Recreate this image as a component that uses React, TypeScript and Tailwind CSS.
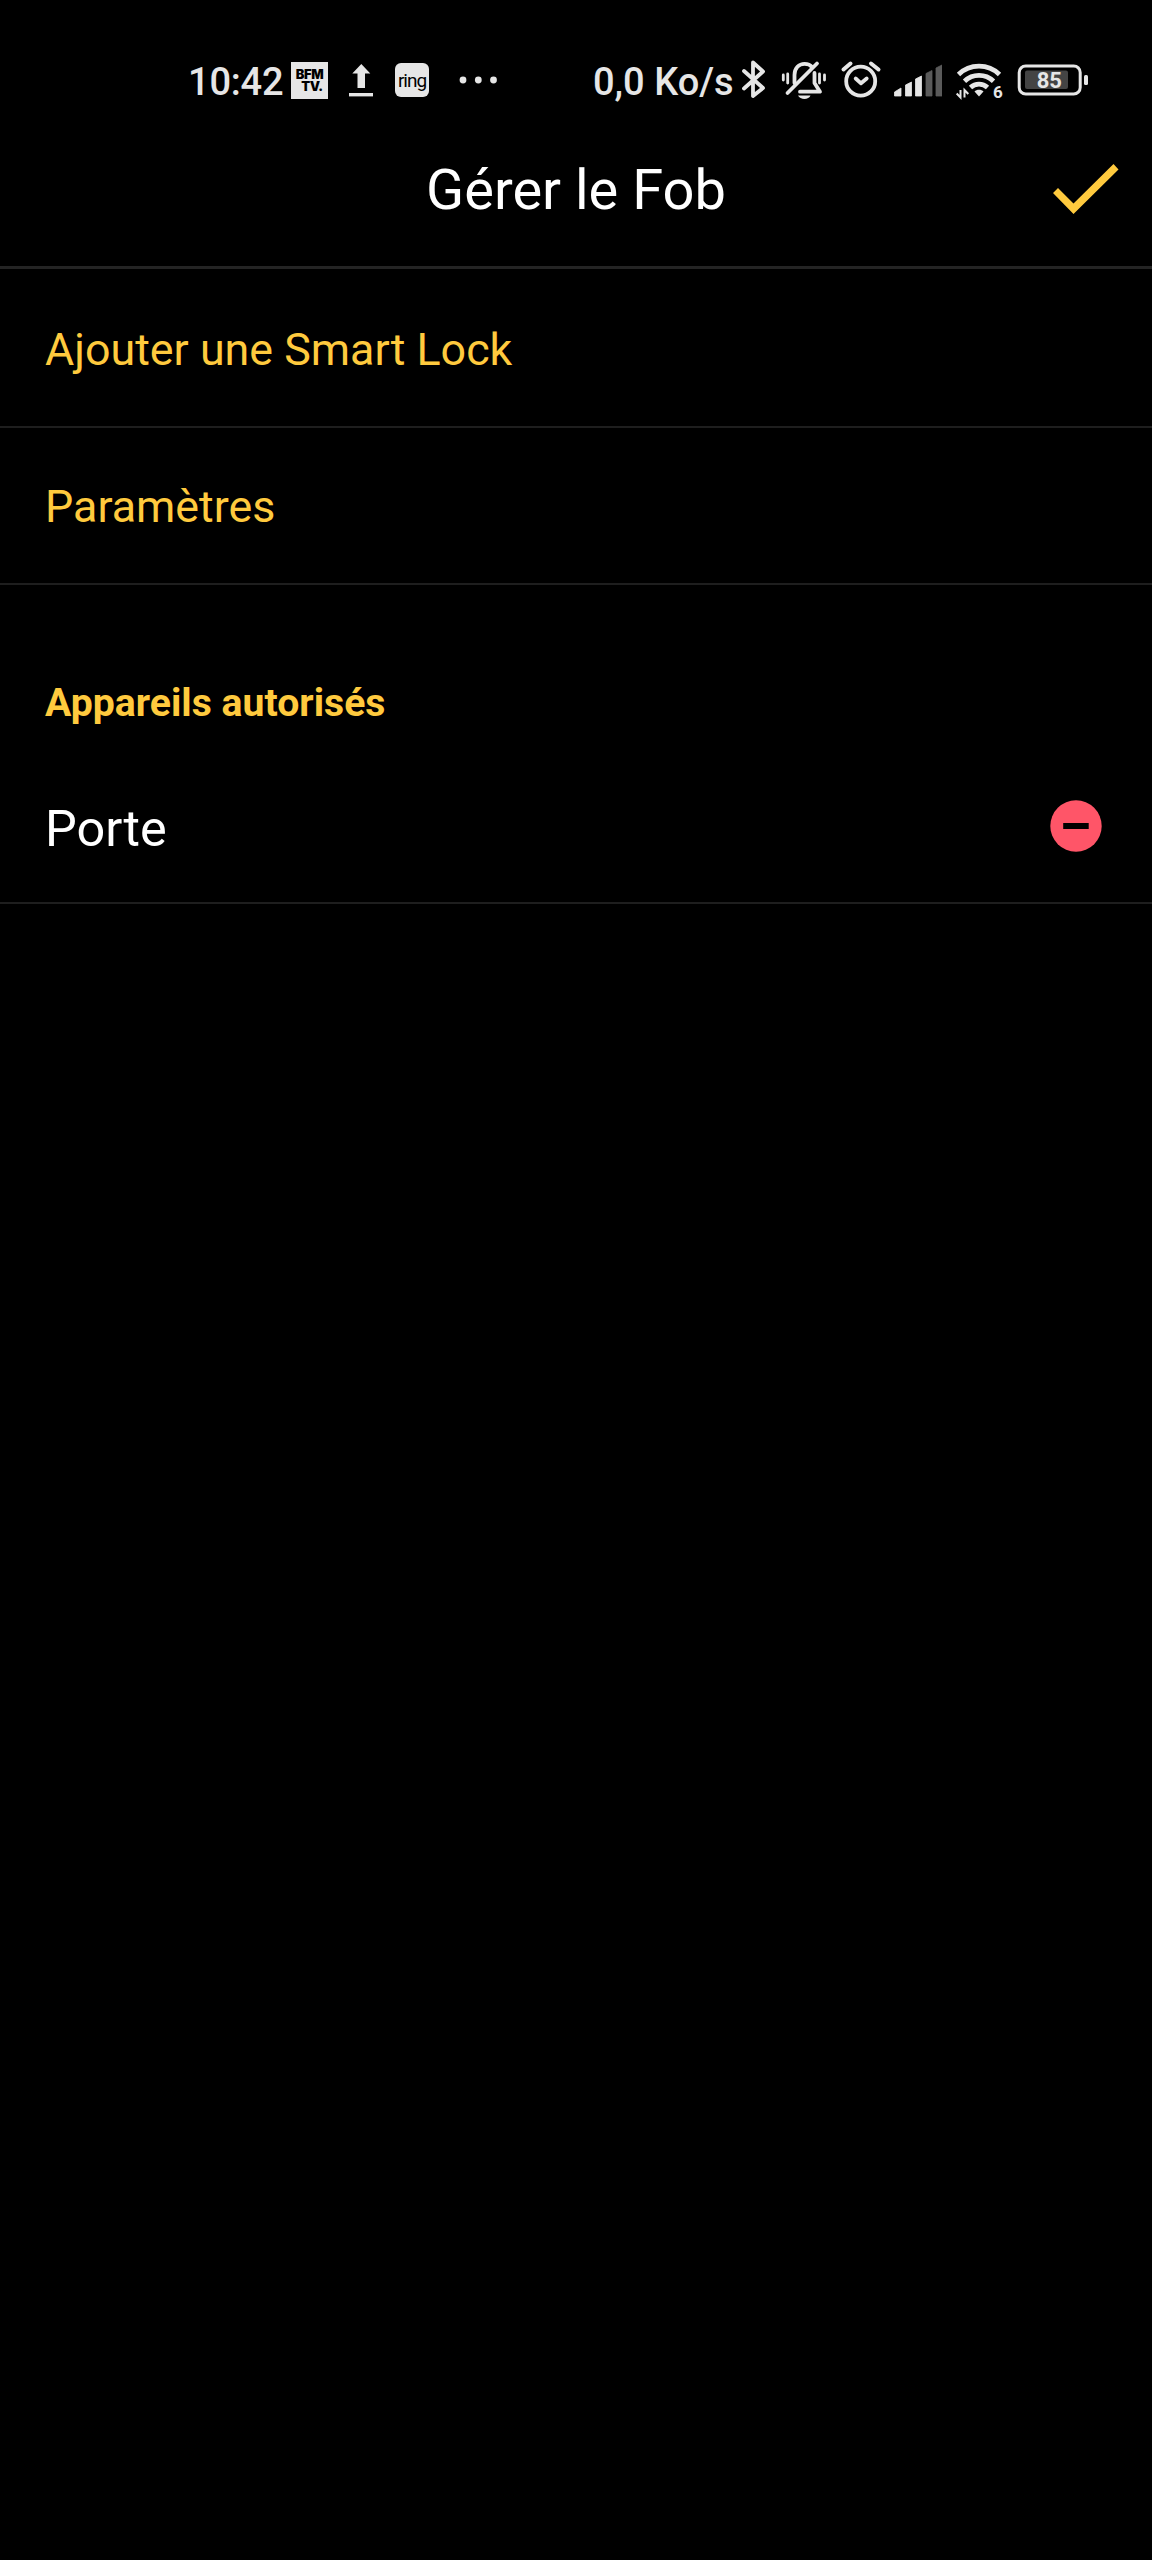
import type { ReactNode } from "react";

const actions = [
  { label: "Ajouter une Smart Lock", className: "h-[159px] pt-[5px]" },
  { label: "Paramètres", className: "h-[157px] pt-[3px]" },
];

const devices = [{ name: "Porte" }];

const signalBars = [
  { points: "0.5,34 7,30 7,38 0.5,38", on: true },
  { points: "11.5,27 17.5,24 17.5,38 11.5,38", on: true },
  { points: "21.5,21 27.5,18 27.5,38 21.5,38", on: true },
  { points: "32,15.5 38,12.5 38,38 32,38", on: false },
  { points: "42,10 48,7 48,38 42,38", on: false },
];

function Icon({ width, className, children }: { width: number; className?: string; children: ReactNode }) {
  return (
    <svg
      width={width}
      height={44}
      viewBox={`0 0 ${width} 44`}
      fill="none"
      className={`shrink-0 ${className ?? ""}`}
    >
      {children}
    </svg>
  );
}

function StatusBar() {
  return (
    <div className="flex h-[160px] items-center pl-[188px] text-[#e6e6e6]">
      <span className="w-[103px] pt-[3px] text-[38px] leading-none font-medium tracking-[-0.2px] whitespace-nowrap">
        10:42
      </span>

      {/* Notifications */}
      <div className="flex h-[37px] w-[37px] shrink-0 flex-col items-center justify-center bg-[#e6e6e6] font-[Inter] font-black text-black">
        <span className="text-[13px] leading-[12px] tracking-[-0.4px]">BFM</span>
        <span className="pl-[5px] text-[13px] leading-[12px] tracking-[-0.4px]">TV.</span>
      </div>
      <Icon width={26} className="ml-[20px]">
        <path d="M13.3 6 22.3 15.5H17V30H9.5V15.5H4.3Z" fill="currentColor" />
        <path d="M1 36.7H25" stroke="currentColor" strokeWidth="3.4" />
      </Icon>
      <div className="ml-[21px] flex h-[34px] w-[34px] shrink-0 items-center justify-center rounded-[6px] bg-[#e6e6e6] text-[19px] leading-none tracking-[-1px] text-black">
        ring
      </div>
      <Icon width={38} className="ml-[30px]">
        <circle cx="4" cy="22" r="3.4" fill="currentColor" />
        <circle cx="19.3" cy="22" r="3.4" fill="currentColor" />
        <circle cx="34.5" cy="22" r="3.4" fill="currentColor" />
      </Icon>

      <span className="ml-[96px] w-[148px] pt-[3px] text-[38px] leading-none font-medium whitespace-nowrap">
        0,0 Ko/s
      </span>

      {/* Bluetooth */}
      <Icon width={26}>
        <path
          d="M3 13 22 30 12 38V4.5L22 13.5 3 30.5"
          stroke="currentColor"
          strokeWidth="3.8"
          strokeLinecap="round"
          strokeLinejoin="round"
        />
      </Icon>

      {/* Muted bell */}
      <Icon width={46} className="ml-[14px]">
        <path
          d="M13.5 25V17C13.5 10 18 5.8 23.5 5.8C27 5.8 29.5 7 31 9"
          stroke="currentColor"
          strokeWidth="3.8"
          strokeLinecap="round"
        />
        <path
          d="M33.5 15V25L39 33.7H19"
          stroke="currentColor"
          strokeWidth="3.8"
          strokeLinecap="round"
          strokeLinejoin="round"
        />
        <path d="M6.5 35 36 5.5" stroke="currentColor" strokeWidth="3.8" strokeLinecap="round" />
        <path d="M17 37.5H29.500C28 42 19 42 17 37.5Z" fill="currentColor" />
        <path
          d="M2.300 17V22M6.700 16V25M38.5 16V25M43.5 17V22"
          stroke="currentColor"
          strokeWidth="2.8"
          strokeLinecap="round"
        />
      </Icon>

      {/* Alarm */}
      <Icon width={42} className="ml-[13px]">
        <circle cx="20.7" cy="23.2" r="14.5" stroke="currentColor" strokeWidth="3.8" />
        <path
          d="M15.7 20.5 21 25.3 26.7 20.5"
          stroke="currentColor"
          strokeWidth="3.8"
          strokeLinecap="round"
          strokeLinejoin="round"
        />
        <path
          d="M3.5 11.5 10.5 5.5M31 5.5 38.5 11.5"
          stroke="currentColor"
          strokeWidth="4"
          strokeLinecap="round"
        />
      </Icon>

      {/* Mobile signal */}
      <Icon width={48} className="ml-[12px]">
        {signalBars.map((bar) => (
          <polygon
            key={bar.points}
            points={bar.points}
            fill={bar.on ? "currentColor" : "#5a5a5a"}
            stroke={bar.on ? "currentColor" : "#5a5a5a"}
            strokeWidth="0.8"
            strokeLinejoin="round"
          />
        ))}
      </Icon>

      {/* Wi-Fi */}
      <Icon width={48} className="ml-[13px]">
        <path
          d="M3.5 16.5A29.5 29.5 0 0 1 44.5 16.5M9.5 23.2A21 21 0 0 1 38.5 23.2M15.5 29.5A12.5 12.5 0 0 1 32.5 29.5"
          stroke="currentColor"
          strokeWidth="4.8"
        />
        <path d="M19.5 33.5C21.5 31 26.5 31 28.5 33.5L24 38.5Z" fill="currentColor" />
        <path d="M5.5 32V39.5L1.7 35.5M9.5 39.5V32L13.3 36" stroke="currentColor" strokeWidth="2" />
        <text x="38" y="40.300" fill="currentColor" fontSize="17" fontWeight="700" fontFamily="Roboto, sans-serif">
          6
        </text>
      </Icon>

      {/* Battery */}
      <Icon width={72} className="ml-[14px]">
        <rect x="2.2" y="8" width="61" height="28" rx="6.5" stroke="currentColor" strokeWidth="3" />
        <rect x="8" y="12.5" width="43" height="18.5" rx="2" fill="#444444" />
        <rect x="67" y="17" width="4" height="10" rx="1.5" fill="currentColor" />
        <text x="32.3" y="29.8" textAnchor="middle" fill="currentColor" fontSize="22" fontWeight="700" fontFamily="Roboto, sans-serif">
          85
        </text>
      </Icon>
    </div>
  );
}

export default function App() {
  return (
    <div className="min-h-[2560px] w-full bg-black font-[Roboto,sans-serif]">
      <header className="h-[269px] border-b-[3px] border-[#242424]">
        <StatusBar />
        <div className="grid h-[60px] grid-cols-[1fr_auto_1fr] items-center">
          <h1 className="col-start-2 text-[56px] leading-[60px] font-normal text-white">Gérer le Fob</h1>
          <button type="button" aria-label="Valider" className="mr-[32px] justify-self-end">
            <svg width={68} height={52} viewBox="0 0 68 52" className="block">
              <path d="M1 29 6 24 21.5 39.5 61.5 0 66.5 5.5 21.5 50Z" fill="#ffca3e" />
            </svg>
          </button>
        </div>
      </header>

      {actions.map((action) => (
        <button
          key={action.label}
          type="button"
          className={`flex w-full items-center border-b-2 border-[#1e1e1e] pl-[45px] text-[44.8px] leading-none text-[#ffca3e] ${action.className}`}
        >
          {action.label}
        </button>
      ))}

      <section className="pt-[90px]">
        <h2 className="h-[56px] pl-[45px] text-[39.2px] leading-[56px] font-bold text-[#ffca3e]">Appareils autorisés</h2>
        {devices.map((device) => (
          <div
            key={device.name}
            className="mt-[20px] flex h-[153px] items-center justify-between border-b-2 border-[#1e1e1e] pr-[49px] pl-[45px]"
          >
            <span className="pt-[5px] text-[50.4px] leading-none text-white">{device.name}</span>
            <button type="button" aria-label="Retirer" className="pb-[2px]">
              <svg width={54} height={54} viewBox="0 0 54 54" className="block">
                <circle cx="27" cy="27" r="25.7" fill="#ff5568" />
                <rect x="14.2" y="24" width="25.5" height="6" fill="#000000" />
              </svg>
            </button>
          </div>
        ))}
      </section>
    </div>
  );
}
